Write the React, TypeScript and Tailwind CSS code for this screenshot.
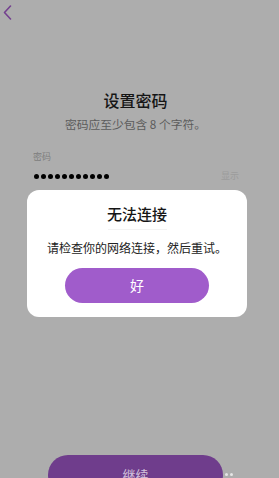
import React from 'react';

const cjk = '"Noto Sans CJK SC", "Noto Sans", sans-serif';

function ErrorDialog() {
  return (
    <div className="absolute left-[27px] top-[190px] flex w-[220px] flex-col items-center rounded-[12px] bg-white pb-[14px] pt-[14px]">
      <h3 className="text-[15px] font-medium leading-[20px] text-[#151515]">无法连接</h3>
      <div className="mt-[5px] h-px w-[59px] bg-[#f3f3f3]" />
      <p className="mt-[10px] text-[12px] leading-[16px] text-[#222]">请检查你的网络连接，然后重试。</p>
      <button className="mt-[12px] flex h-[35px] w-[144px] items-center justify-center rounded-full bg-[#a05ccb] text-[14px] text-white">
        好
      </button>
    </div>
  );
}

export default function App() {
  return (
    <div
      className="relative flex h-[478px] w-[279px] flex-col overflow-hidden bg-[#adadad]"
      style={{ fontFamily: cjk }}
    >
      <div className="pl-[3px] pt-[5px]">
        <svg width="9" height="15" viewBox="0 0 9 15" fill="none">
          <path d="M7.5 1 L1.5 7.5 L7.5 14" stroke="#74418f" strokeWidth="1.6" strokeLinecap="round" strokeLinejoin="round" />
        </svg>
      </div>

      <div className="flex flex-col items-center pr-[8px]">
        <h1 className="mt-[69px] text-[16px] font-medium leading-[22px] text-[#151515]">设置密码</h1>
        <p className="mt-[5px] text-[11.75px] leading-[16px] text-[#5c5c5c]">密码应至少包含 8 个字符。</p>
      </div>

      <label className="ml-[33px] mt-[19px] text-[9px] leading-[12px] text-[#7d7d7d]">密码</label>
      <div className="mt-[6px] flex h-[14px] items-center justify-between pl-[34px] pr-[40px]">
        <div className="flex gap-[2px]">
          {Array.from({ length: 11 }).map((_, i) => (
            <span key={i} className="h-[5px] w-[5px] rounded-full bg-black" />
          ))}
        </div>
        <span className="text-[9px] text-[#9c9c9c]">显示</span>
      </div>

      <div className="mb-[-17px] mt-auto flex items-end">
        <button className="ml-[48px] flex h-[40px] w-[175px] items-center justify-center rounded-full bg-[#6f3d8c] text-[13px] text-[#d3c3dd]">
          继续
        </button>
        <div className="mb-[19px] ml-[2px] flex gap-[2px]">
          <span className="h-[3px] w-[3px] rounded-full bg-[#e6e6e6]" />
          <span className="h-[3px] w-[3px] rounded-full bg-[#e6e6e6]" />
        </div>
      </div>

      <ErrorDialog />
    </div>
  );
}
